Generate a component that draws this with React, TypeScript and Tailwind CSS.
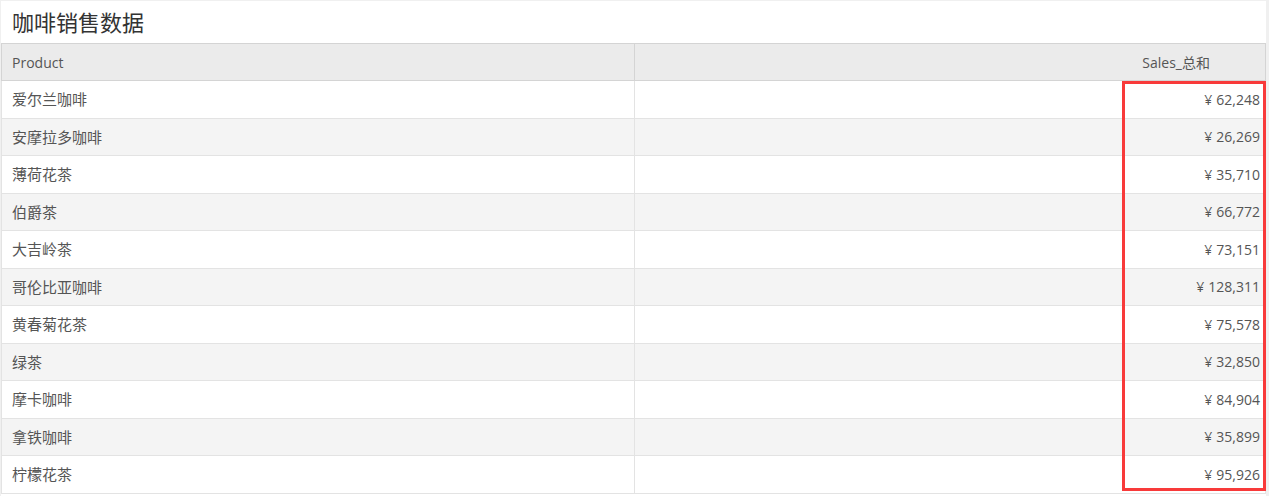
import React from "react";

const rows = [
  { product: "爱尔兰咖啡", sales: "62,248" },
  { product: "安摩拉多咖啡", sales: "26,269" },
  { product: "薄荷花茶", sales: "35,710" },
  { product: "伯爵茶", sales: "66,772" },
  { product: "大吉岭茶", sales: "73,151" },
  { product: "哥伦比亚咖啡", sales: "128,311" },
  { product: "黄春菊花茶", sales: "75,578" },
  { product: "绿茶", sales: "32,850" },
  { product: "摩卡咖啡", sales: "84,904" },
  { product: "拿铁咖啡", sales: "35,899" },
  { product: "柠檬花茶", sales: "95,926" },
];

export default function App() {
  return (
    <div
      className="h-[496px] w-[1269px] overflow-hidden bg-[#f0f0f0] pt-px pl-px"
      style={{ fontFamily: '"Open Sans", "Noto Sans CJK SC", sans-serif' }}
    >
      <div className="relative h-[495px] w-[1265px] bg-white">
        <h1 className="h-[42px] pl-[11px] text-[22px] leading-[42px] text-[#333]">咖啡销售数据</h1>

        <table className="w-full table-fixed border-collapse text-[14px] text-[#555]">
          <colgroup>
            <col className="w-[633px]" />
            <col />
          </colgroup>
          <thead>
            <tr className="h-[37px] bg-[#ebebeb]">
              <th className="border border-[#d4d4d4] pl-[10px] text-left font-normal">Product</th>
              <th className="border border-[#d4d4d4] pr-[55px] text-right font-normal">Sales_总和</th>
            </tr>
          </thead>
          <tbody>
            {rows.map((r, i) => (
              <tr key={r.product} className={`h-[37.5px] ${i % 2 === 1 ? "bg-[#f4f4f4]" : "bg-white"}`}>
                <td className="border border-[#e3e3e3] pl-[10px] text-[15px]">{r.product}</td>
                <td className="border border-[#e3e3e3] pr-[5px] text-right">
                  <span className="mr-[4px]">¥</span>
                  {r.sales}
                </td>
              </tr>
            ))}
          </tbody>
        </table>

        {/* highlight box over the sales column */}
        <div className="pointer-events-none absolute top-[80px] left-[1121px] h-[410px] w-[144px] border-[3px] border-[#f83a3a]" />
      </div>
    </div>
  );
}
